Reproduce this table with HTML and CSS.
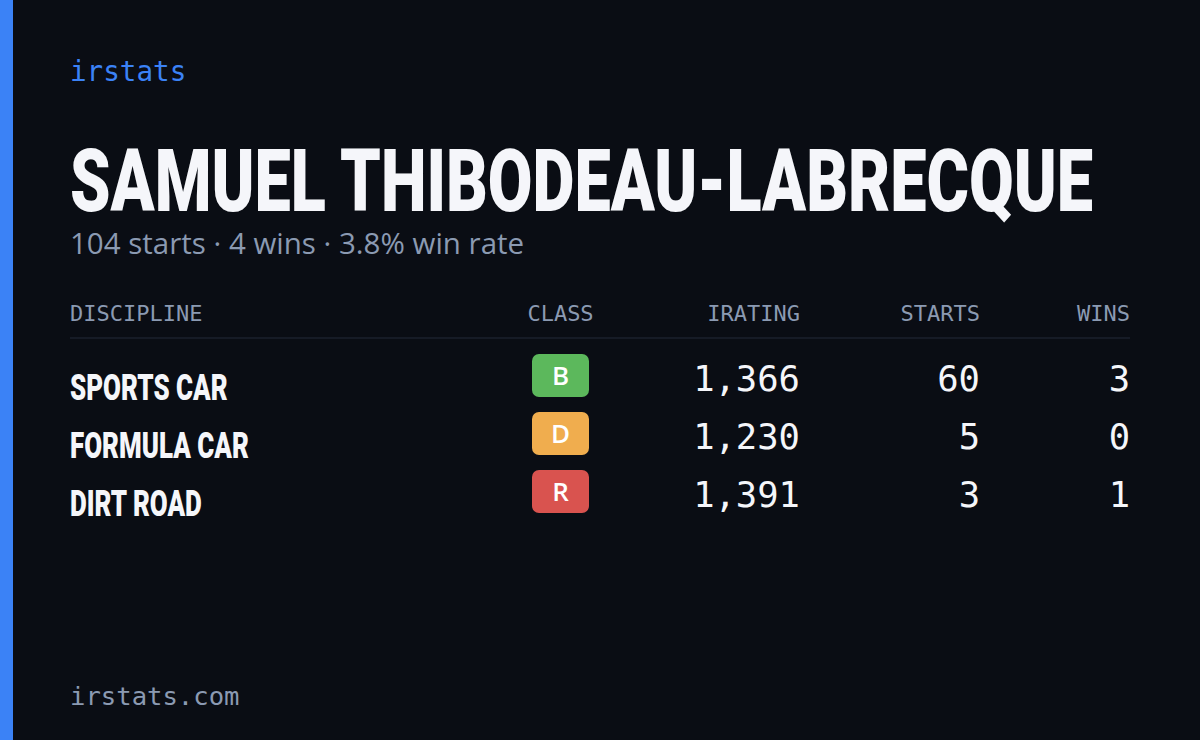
FILE: index.html
```html
<!DOCTYPE html>
<html>
<head>
<meta charset="utf-8">
<link rel="stylesheet" href="styles.css">
</head>
<body>
<div class="card">
  <div class="accent"></div>
  <div class="content">
    <div class="brand">irstats</div>
    <div class="name-wrap"><h1 class="name">SAMUEL THIBODEAU-LABRECQUE</h1></div>
    <div class="summary">104 starts · 4 wins · 3.8% win rate</div>
    <div class="table">
      <div class="row head">
        <div class="c-disc">DISCIPLINE</div>
        <div class="c-class">CLASS</div>
        <div class="c-num">IRATING</div>
        <div class="c-num">STARTS</div>
        <div class="c-num">WINS</div>
      </div>
      <div class="row data">
        <div class="c-disc"><span class="disc">SPORTS CAR</span></div>
        <div class="c-class"><span class="badge b-green">B</span></div>
        <div class="c-num num">1,366</div>
        <div class="c-num num">60</div>
        <div class="c-num num">3</div>
      </div>
      <div class="row data">
        <div class="c-disc"><span class="disc">FORMULA CAR</span></div>
        <div class="c-class"><span class="badge b-orange">D</span></div>
        <div class="c-num num">1,230</div>
        <div class="c-num num">5</div>
        <div class="c-num num">0</div>
      </div>
      <div class="row data">
        <div class="c-disc"><span class="disc">DIRT ROAD</span></div>
        <div class="c-class"><span class="badge b-red">R</span></div>
        <div class="c-num num">1,391</div>
        <div class="c-num num">3</div>
        <div class="c-num num">1</div>
      </div>
    </div>
    <div class="footer">irstats.com</div>
  </div>
</div>
</body>
</html>
```

FILE: styles.css
```css
html, body {
  margin: 0;
  padding: 0;
  background: #0a0d14;
}
.card {
  width: 1200px;
  height: 740px;
  display: flex;
  background: #0a0d14;
  overflow: hidden;
}
.accent {
  width: 13px;
  background: #3b82f6;
  flex: none;
}
.content {
  flex: 1;
  min-width: 0;
  padding: 0 70px 0 57px;
  display: flex;
  flex-direction: column;
}
.brand {
  margin-top: 54px;
  font-family: "DejaVu Sans Mono", monospace;
  font-size: 27.6px;
  line-height: 36px;
  color: #3b82f6;
}
.name-wrap {
  margin-top: 49px;
  height: 84px;
  white-space: nowrap;
}
.name {
  display: inline-block;
  margin: 0;
  font-family: Roboto, sans-serif;
  font-weight: 900;
  font-size: 88px;
  line-height: 84px;
  color: #f5f6fa;
  transform: scaleX(0.736);
  transform-origin: left center;
}
.summary {
  margin-top: 2px;
  font-family: "Open Sans", sans-serif;
  font-size: 29.5px;
  line-height: 36px;
  color: #8b9ab2;
}
.table {
  margin-top: 34px;
}
.row {
  display: grid;
  grid-template-columns: 458px 65px 207px 180px 150px;
  align-items: center;
}
.head {
  font-family: "DejaVu Sans Mono", monospace;
  font-size: 22px;
  color: #8b9ab2;
  height: 36px;
  padding-bottom: 6px;
  border-bottom: 2px solid #161b26;
  margin-bottom: 9px;
}
.c-class {
  display: flex;
  justify-content: center;
  align-items: center;
}
.c-num { text-align: right; }
.data { height: 58px; }
.c-disc {
  white-space: nowrap;
}
.disc {
  display: inline-block;
  font-family: Roboto, sans-serif;
  font-weight: 900;
  font-size: 36.5px;
  color: #f5f6fa;
  padding-top: 18px;
  transform: scaleX(0.71);
  transform-origin: left center;
}
.num {
  font-family: "DejaVu Sans Mono", monospace;
  font-size: 35.5px;
  color: #f5f6fa;
}
.badge {
  display: block;
  width: 57px;
  height: 43px;
  line-height: 43px;
  margin-bottom: 6px;
  border-radius: 7px;
  font-family: "Open Sans", sans-serif;
  font-weight: 600;
  font-size: 26px;
  color: #ffffff;
  text-align: center;
}
.b-green { background: #5cb85c; }
.b-orange { background: #f0ad4e; }
.b-red { background: #d9534f; }
.footer {
  margin-top: auto;
  margin-bottom: 26px;
  font-family: "DejaVu Sans Mono", monospace;
  font-size: 25.6px;
  line-height: 36px;
  color: #8b9ab2;
}
```
